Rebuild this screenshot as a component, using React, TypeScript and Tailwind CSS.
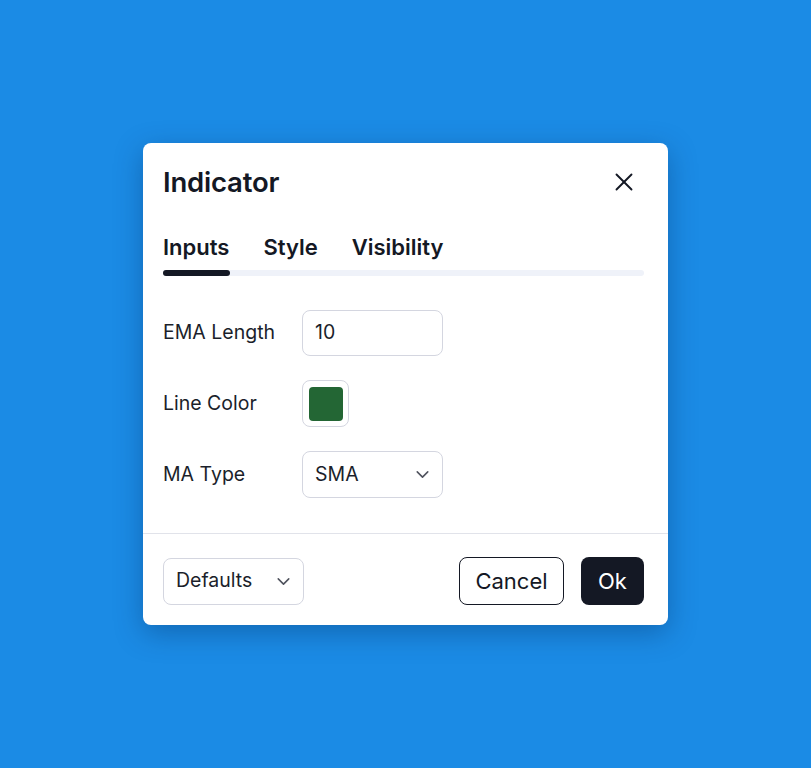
import { ChevronDown, X } from "lucide-react";

const FONT = { fontFamily: "Inter, 'Noto Sans', sans-serif" };

const TABS = ["Inputs", "Style", "Visibility"];

function SelectBox({ value, width }: { value: string; width: string }) {
  return (
    <div
      className={`flex h-[47px] ${width} items-center justify-between rounded-lg border border-[#d4d6e0] bg-white pl-3 pr-[9px]`}
    >
      <span className="text-[19.5px] text-[#1b1f2b]">{value}</span>
      <ChevronDown className="h-[21px] w-[21px] text-[#50535e]" strokeWidth={1.8} />
    </div>
  );
}

export default function App() {
  return (
    <div
      className="flex h-[768px] w-[811px] items-center justify-center bg-[#1b8be5]"
      style={FONT}
    >
      <div className="flex h-[482px] w-[525px] flex-col rounded-lg bg-white shadow-[0_8px_28px_rgba(0,40,90,0.35)]">
        <div className="flex items-center justify-between pt-[21px] pr-[29px] pl-5">
          <h1 className="text-[27.5px] leading-9 font-semibold tracking-[-0.2px] text-[#141824]">
            Indicator
          </h1>
          <X className="h-[30px] w-[30px] text-[#141824]" strokeWidth={1.5} />
        </div>

        <div className="pt-[31px] pr-6 pl-5">
          <div className="flex gap-[34px]">
            {TABS.map((t) => (
              <span
                key={t}
                className="text-[22px] leading-8 font-semibold text-[#141824]"
              >
                {t}
              </span>
            ))}
          </div>
          <div className="mt-[7px] flex h-[6px] w-full rounded-full bg-[#eff2f9]">
            <div className="h-[6px] w-[67px] rounded-full bg-[#141824]" />
          </div>
        </div>

        <div className="flex flex-1 flex-col gap-[24px] pt-[34px] pr-6 pl-5">
          <div className="flex items-center">
            <span className="w-[139px] text-[19.5px] text-[#1b1f2b]">EMA Length</span>
            <div className="flex h-[46px] w-[141px] items-center rounded-lg border border-[#d4d6e0] px-3">
              <span className="text-[19.5px] text-[#1b1f2b]">10</span>
            </div>
          </div>
          <div className="flex items-center">
            <span className="w-[139px] text-[19.5px] text-[#1b1f2b]">Line Color</span>
            <div className="flex h-[47px] w-[47px] items-center justify-center rounded-lg border border-[#d4d6e0]">
              <div className="h-[34px] w-[34px] rounded-[4px] bg-[#236634]" />
            </div>
          </div>
          <div className="flex items-center">
            <span className="w-[139px] text-[19.5px] text-[#1b1f2b]">MA Type</span>
            <SelectBox value="SMA" width="w-[141px]" />
          </div>
        </div>

        <div className="border-t border-[#e1e3ea]" />

        <div className="flex items-center justify-between pt-[23px] pr-6 pb-5 pl-5">
          <SelectBox value="Defaults" width="w-[141px]" />
          <div className="flex gap-[17px]">
            <button className="h-[48px] w-[105px] rounded-lg border-[1.5px] border-[#141824] bg-white text-[22px] text-[#141824]">
              Cancel
            </button>
            <button className="h-[48px] w-[63px] rounded-lg bg-[#141824] text-[22px] text-white">
              Ok
            </button>
          </div>
        </div>
      </div>
    </div>
  );
}
